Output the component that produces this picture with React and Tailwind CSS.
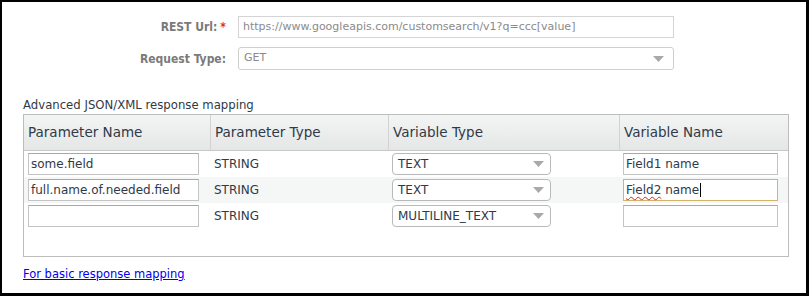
import React from 'react';

const font = { fontFamily: '"DejaVu Sans", Tahoma, sans-serif' };
const labelFont = { fontFamily: '"DejaVu Sans Condensed", "DejaVu Sans", sans-serif' };

function Arrow() {
  return (
    <svg width="11" height="6" viewBox="0 0 11 6" className="shrink-0">
      <path d="M0 0 L11 0 L5.5 6 Z" fill="#a9a9a9" />
    </svg>
  );
}

function TypeSelect({ value }) {
  return (
    <div className="flex h-[22px] w-[159px] items-center justify-between rounded-[4px] border border-[#b9b9b9] bg-white pl-[5px] pr-[6px] text-[12px] text-[#2f3a48]">
      <span>{value}</span>
      <Arrow />
    </div>
  );
}

function Cell({ children, className = '' }) {
  return <div className={`flex items-center ${className}`}>{children}</div>;
}

export default function App() {
  const rows = [
    { name: 'some.field', varType: 'TEXT', varName: 'Field1 name' },
    { name: 'full.name.of.needed.field', varType: 'TEXT', varName: 'Field2 name', focused: true },
    { name: '', varType: 'MULTILINE_TEXT', varName: '' },
  ];

  return (
    <div className="h-[296px] w-[809px] border-t-2 border-l-2 border-r-[3px] border-b-[3px] border-black bg-white" style={font}>
      <div className="flex flex-col gap-[9px] pt-[14px]">
        <div className="flex items-center">
          <div className="flex w-[224px] justify-end text-[12px] font-bold text-[#7a7a7a]" style={labelFont}>
            REST Url:<span className="ml-[3px] text-[#e03030]">*</span>
          </div>
          <div className="ml-[12px] flex h-[22px] w-[436px] items-center border border-[#d4d4d4] bg-white pl-[4px] text-[11px] text-[#8a8a8a]">
            https://www.googleapis.com/customsearch/v1?q=ccc[value]
          </div>
        </div>
        <div className="flex items-center">
          <div className="w-[224px] text-right text-[12px] font-bold text-[#7a7a7a]" style={labelFont}>Request Type:</div>
          <div className="ml-[12px] flex h-[23px] w-[436px] items-center justify-between rounded-[3px] border border-[#cfcfcf] bg-white pl-[5px] pr-[9px] text-[11px] text-[#8a8a8a]">
            <span>GET</span>
            <Arrow />
          </div>
        </div>
      </div>

      <div className="mt-[28px] pl-[21px] text-[11.7px] leading-[14px] text-[#2f3a48]">Advanced JSON/XML response mapping</div>

      <div className="ml-[21px] mt-[2px] h-[143px] w-[766px] border border-[#bdbdbd]">
        <div className="grid h-[36px] grid-cols-[186px_178px_231px_1fr] border-b border-[#c8c8c8] bg-gradient-to-b from-[#f3f4f4] to-[#e5e7e7] text-[13.5px] text-[#2f3a48]">
          <Cell className="pl-[4px]">Parameter Name</Cell>
          <Cell className="border-l border-[#d2d2d2] pl-[4px]">Parameter Type</Cell>
          <Cell className="border-l border-[#d2d2d2] pl-[4px]">Variable Type</Cell>
          <Cell className="border-l border-[#d2d2d2] pl-[4px]">Variable Name</Cell>
        </div>
        {rows.map((r, i) => (
          <div key={i} className={`grid h-[26px] grid-cols-[186px_178px_231px_1fr] text-[12px] text-[#2f3a48] ${i === 1 ? 'bg-[#f5f6f6]' : ''}`}>
            <Cell className="pl-[4px]">
              <div className="flex h-[22px] w-[171px] items-center border border-[#c4c4c4] border-t-[#a8a8a8] bg-white pl-[2px]">{r.name}</div>
            </Cell>
            <Cell className="pl-[4px]">STRING</Cell>
            <Cell className="pl-[4px]">
              <TypeSelect value={r.varType} />
            </Cell>
            <Cell className="pl-[4px]">
              {r.focused ? (
                <div className="flex h-[22px] w-[155px] items-center border border-[#d2b468] bg-white pl-[2px]">
                  <span className="underline decoration-wavy decoration-[#e02020] decoration-1 underline-offset-2">Field2</span>
                  <span>&nbsp;name</span>
                  <span className="ml-[1px] h-[14px] w-px bg-black" />
                </div>
              ) : (
                <div className="flex h-[22px] w-[155px] items-center border border-[#c4c4c4] border-t-[#a8a8a8] bg-white pl-[2px]">{r.varName}</div>
              )}
            </Cell>
          </div>
        ))}
      </div>

      <a href="#" className="ml-[21px] mt-[9px] inline-block text-[11.5px] text-[#0000ee] underline">For basic response mapping</a>
    </div>
  );
}
